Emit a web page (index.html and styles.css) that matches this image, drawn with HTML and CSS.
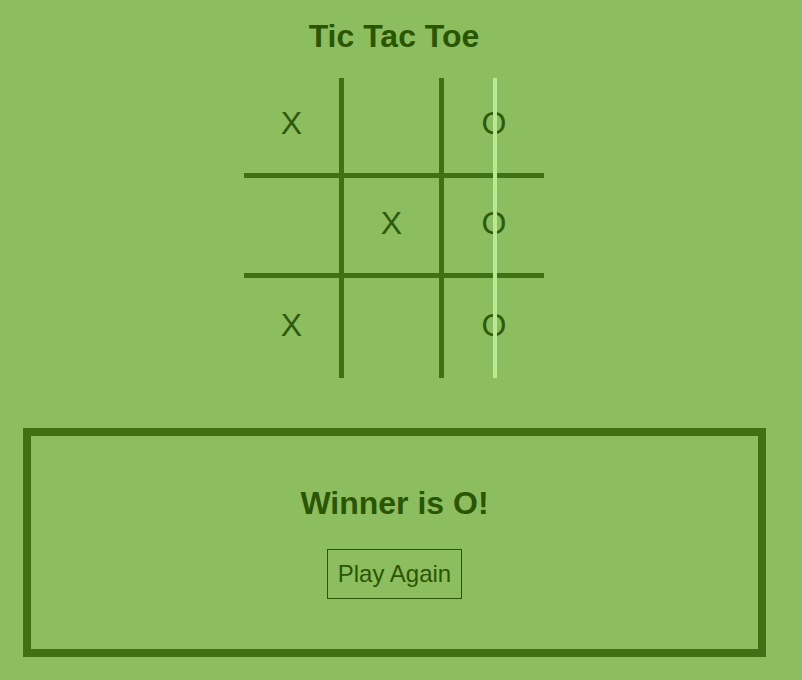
FILE: index.html
```html
<!DOCTYPE html>
<html>
<head>
<meta charset="utf-8">
<title>Tic Tac Toe</title>
<link rel="stylesheet" href="styles.css">
</head>
<body>
<div class="page">
  <h1 class="title">Tic Tac Toe</h1>
  <div class="board">
    <div class="cell">X</div>
    <div class="cell"></div>
    <div class="cell">O</div>
    <div class="cell"></div>
    <div class="cell">X</div>
    <div class="cell">O</div>
    <div class="cell">X</div>
    <div class="cell"></div>
    <div class="cell">O</div>
    <div class="win-line"></div>
  </div>
  <div class="result">
    <h2 class="winner">Winner is O!</h2>
    <button class="again">Play Again</button>
  </div>
</div>
</body>
</html>
```
FILE: styles.css
```css
html, body {
  margin: 0;
  padding: 0;
  background: #8cbe5f;
}
body {
  font-family: "Liberation Sans", Arial, sans-serif;
  color: #2b5500;
}
.page {
  width: 788px;
  padding-top: 18px;
  display: flex;
  flex-direction: column;
  align-items: center;
}
.title {
  margin: 0;
  font-size: 32px;
  font-weight: bold;
  line-height: 37px;
  color: #2b5500;
}
.board {
  position: relative;
  margin-top: 23px;
  width: 300px;
  height: 300px;
  display: grid;
  grid-template-columns: 100px 100px 100px;
  grid-template-rows: 100px 100px 100px;
}
.cell {
  box-sizing: border-box;
  display: flex;
  align-items: center;
  justify-content: center;
  padding-bottom: 5px;
  font-size: 32px;
  color: #2f5a0a;
  border-right: 5px solid #3f7014;
  border-bottom: 5px solid #3f7014;
}
.cell:nth-child(3n) {
  border-right: none;
}
.cell:nth-child(n+7) {
  border-bottom: none;
}
.win-line {
  position: absolute;
  left: 249px;
  top: 0;
  width: 4px;
  height: 300px;
  background: #b8e994;
}
.result {
  box-sizing: border-box;
  margin-top: 50px;
  margin-left: 1px;
  width: 743px;
  height: 229px;
  border: 8px solid #3f7014;
  padding-top: 49px;
  display: flex;
  flex-direction: column;
  align-items: center;
}
.winner {
  margin: 0 0 27px;
  font-size: 32px;
  font-weight: bold;
  line-height: 37px;
  color: #2b5500;
}
.again {
  font-family: "Liberation Sans", Arial, sans-serif;
  font-size: 24px;
  color: #2b5500;
  background: transparent;
  border: 1px solid #2b5500;
  padding: 10px 10px;
  line-height: 28px;
  margin: 0;
}
```
